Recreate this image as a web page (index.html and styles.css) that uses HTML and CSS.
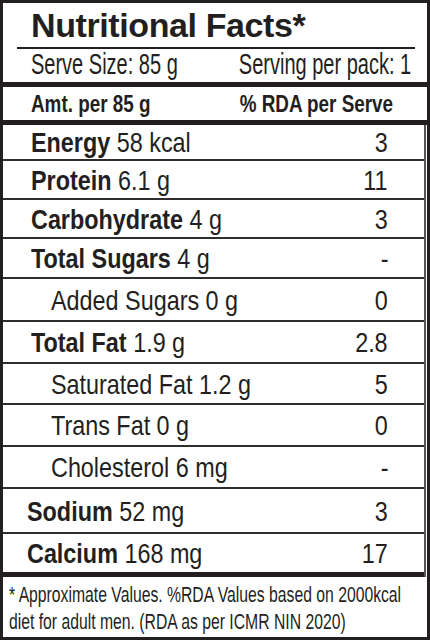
FILE: index.html
```html
<!DOCTYPE html>
<html lang="en">
<head>
    <meta charset="UTF-8">
    <meta name="viewport" content="width=device-width, initial-scale=1.0">
    <title>Nutritional Facts</title>
    <link rel="stylesheet" href="styles.css">
</head>
<body>
    <div class="label">
        <h1 class="title">Nutritional Facts*</h1>
        <div class="serve">
            <span>Serve Size: 85 g</span>
            <span>Serving per pack: 1</span>
        </div>
        <div class="head">
            <span>Amt. per 85 g</span>
            <span>% RDA per Serve</span>
        </div>
        <div class="rows">
            <div class="row"><span><b>Energy</b> 58 kcal</span><span>3</span></div>
            <div class="row"><span><b>Protein</b> 6.1 g</span><span>11</span></div>
            <div class="row"><span><b>Carbohydrate</b> 4 g</span><span>3</span></div>
            <div class="row"><span><b>Total Sugars</b> 4 g</span><span>-</span></div>
            <div class="row sub"><span>Added Sugars 0 g</span><span>0</span></div>
            <div class="row"><span><b>Total Fat</b> 1.9 g</span><span>2.8</span></div>
            <div class="row sub"><span>Saturated Fat 1.2 g</span><span>5</span></div>
            <div class="row sub"><span>Trans Fat 0 g</span><span>0</span></div>
            <div class="row sub"><span>Cholesterol 6 mg</span><span>-</span></div>
            <div class="row out"><span><b>Sodium</b> 52 mg</span><span>3</span></div>
            <div class="row out"><span><b>Calcium</b> 168 mg</span><span>17</span></div>
        </div>
        <p class="note"><span>* Approximate Values. %RDA Values based on 2000kcal<br>diet for adult men. (RDA as per ICMR NIN 2020)</span></p>
    </div>
</body>
</html>
```

FILE: styles.css
```css
* {
    box-sizing: border-box;
}

body {
    margin: 0;
    font-family: "Liberation Sans", Arial, sans-serif;
    color: #231f20;
    background-color: #fff;
}

.label {
    width: 430px;
    height: 640px;
    border: 3px solid #231f20;
    display: flex;
    flex-direction: column;
    overflow: hidden;
}

.title {
    margin: 0 12px 0 14px;
    padding: 1px 0 0 14px;
    height: 46px;
    font-size: 34px;
    font-weight: bold;
    line-height: 43px;
    letter-spacing: -0.4px;
    border-bottom: 2px solid #231f20;
}

/* the label uses a condensed face: squeeze Arial-metric text to narrow width */
.serve span,
.head span,
.row span {
    display: inline-block;
    white-space: nowrap;
}

.serve span:first-child,
.head span:first-child,
.row span:first-child {
    flex-shrink: 1;
    min-width: 0;
}

.serve span:last-child,
.head span:last-child,
.row span:last-child {
    flex-shrink: 0;
}

.serve {
    display: flex;
    justify-content: space-between;
    height: 38px;
    padding: 0 16px 0 28px;
    font-size: 24.4px;
    line-height: 33px;
    border-bottom: 5px solid #231f20;
}

.serve span {
    transform: scale(0.82, 1.18);
}

.serve span:first-child {
    transform-origin: 0 75%;
}

.serve span:last-child {
    transform-origin: 100% 75%;
}

.head {
    display: flex;
    justify-content: space-between;
    height: 38px;
    padding: 1px 34px 0 28px;
    font-size: 23px;
    font-weight: bold;
    line-height: 32px;
    border-bottom: 5px solid #231f20;
}

.head span,
.row span {
    transform: scaleX(0.82);
}

.head span:first-child,
.row span:first-child {
    transform-origin: 0 50%;
}

.head span:last-child,
.row span:last-child {
    transform-origin: 100% 50%;
}

.rows {
    margin-right: 1px;
    border-right: 2px solid #555;
}

.row {
    display: flex;
    justify-content: space-between;
    align-items: center;
    padding: 0 36px 0 28px;
    font-size: 28.5px;
    line-height: 30px;
    border-bottom: 2px solid #2e2e2e;
}

.row.sub {
    padding-left: 48px;
}

.row.out {
    padding-left: 24px;
}

.row:nth-child(1) { height: 36px; }
.row:nth-child(2) { height: 39px; }
.row:nth-child(3) { height: 39px; }
.row:nth-child(4) { height: 40px; }
.row:nth-child(5) { height: 43px; }
.row:nth-child(6) { height: 42px; }
.row:nth-child(7) { height: 41px; }
.row:nth-child(8) { height: 42px; }
.row:nth-child(9) { height: 42px; }
.row:nth-child(10) { height: 45px; }

.row:last-child {
    height: 43px;
    border-bottom: 5px solid #231f20;
}

.note {
    flex: 1;
    margin: 0;
    padding: 3.5px 0 0 6px;
}

.note span {
    display: inline-block;
    font-size: 19.2px;
    line-height: 23.3px;
    white-space: nowrap;
    transform: scale(0.82, 1.16);
    transform-origin: 0 0;
}
```
